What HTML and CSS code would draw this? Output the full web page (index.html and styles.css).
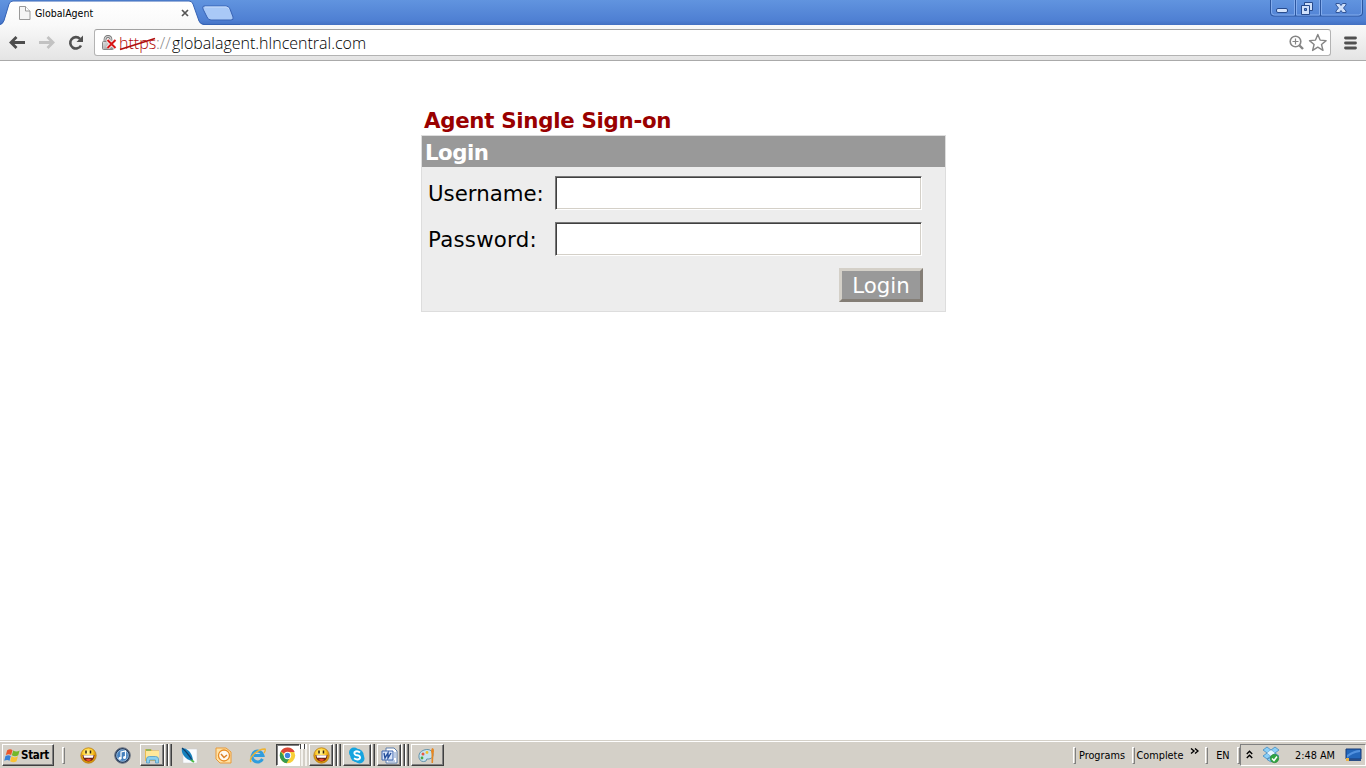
FILE: index.html
```html
<!DOCTYPE html>
<html lang="en">
<head>
<meta charset="utf-8">
<title>GlobalAgent</title>
<link rel="stylesheet" href="styles.css">
</head>
<body>
<svg width="0" height="0" class="defs" aria-hidden="true">
  <defs>
    <linearGradient id="lock" x2="1" y2="1"><stop stop-color="#e6e6e6"/><stop offset="1" stop-color="#8b8b8b"/></linearGradient>
    <radialGradient id="yellow" cx=".45" cy=".3"><stop stop-color="#fff7a0"/><stop offset=".6" stop-color="#ffcf30"/><stop offset="1" stop-color="#dc9508"/></radialGradient>
    <symbol id="smiley" viewBox="0 0 17 17">
      <circle cx="8.500" cy="8.500" r="7.700" fill="url(#yellow)" stroke="#b77d17" stroke-width=".8"/>
      <path d="M6 3.500v3M10.500 3.500v3" stroke="#302010" stroke-width="1.500"/>
      <path d="M2.500 8h12q-.8 6.500-6 6.500T2.500 8z" fill="#6b2116"/>
      <path d="M3.300 8.300h10.400l-.8 2.500H4.100z" fill="#fff"/>
      <path d="M5.500 12.800q3-2 6 0-3 2.400-6 0z" fill="#ef4a33"/>
    </symbol>
  </defs>
</svg>
<div class="screen">
  <header class="tabstrip">
    <svg class="tabs" width="240" height="25" viewBox="0 0 240 25">
      <defs><linearGradient id="tab" x2="0" y2="1"><stop stop-color="#fff"/><stop offset="1" stop-color="#f9f9f9"/></linearGradient></defs>
      <path d="M0 25q3-1 4-4L9 4q1-3 4-3h176q3 0 4 3l6 17q1 3 5 4z" fill="url(#tab)"/>
      <path d="M0 24.500q3-1 4-4L9 4q1-3 4-3h176q3 0 4 3l6 17q1 3 5 3.500h36" fill="none" stroke="#3563b5"/>
      <path d="M204 6h22q3 0 4 3l3 8q1 3-2 3h-20q-3 0-4-3l-4-8q-1-3 1-3z" fill="#a9c9f7" stroke="#3762b4"/>
      <path d="M205 7h21q2 0 3 2" fill="none" stroke="#c9ddfb"/>
    </svg>
    <div class="tab">
      <svg width="12" height="14" viewBox="0 0 12 14"><path d="M.5.5h6l4.500 4.500v8.500H.5z" fill="#f5f5f5" stroke="#999"/><path d="M6.500.5V5H11" fill="#fff" stroke="#999"/></svg>
      <span class="tabtitle">GlobalAgent</span>
      <svg class="close" width="8" height="8" viewBox="0 0 8 8"><path d="M1 1l6 6M7 1L1 7" stroke="#555" stroke-width="1.700"/></svg>
    </div>
    <svg class="winbuttons" width="98" height="18" viewBox="0 0 98 18">
      <path d="M1.500 0v13q0 3 3 3h86q3 0 3-3V0M26.500 0v16M51.500 0v16" fill="none" stroke="#2c569f"/>
      <path d="M2.500 0v12q0 3 3 3h20V0M27.500 0v15h23V0M52.500 0v15h37q3 0 3-3V0" fill="none" stroke="#83aced"/>
      <rect x="7.500" y="8.500" width="11" height="4" rx="1.500" fill="#d4e3fb" stroke="#274b8d"/>
      <path d="M35.500 2.500h8v8h-8z" fill="#cfe0fa" stroke="#274b8d"/>
      <path d="M32.500 5.500h8v9h-8z" fill="#cfe0fa" stroke="#274b8d"/>
      <path d="M35.500 8.500h2v2h-2z" fill="#5f94e3" stroke="#274b8d"/>
      <path d="M67 3.500h3.500l1.500 2 1.500-2H77v1.500L74.500 8l2.500 3v1.500h-3.500l-1.500-2-1.500 2H67V11l2.500-3L67 5z" fill="#cfe0fa" stroke="#274b8d" stroke-width=".9"/>
    </svg>
  </header>
  <nav class="toolbar">
    <svg class="navicons" width="94" height="35" viewBox="0 0 94 35">
      <path d="M25 17.500H12M16.500 12L11 17.500l5.500 5.500" fill="none" stroke="#4d4d4d" stroke-width="2.800"/>
      <path d="M39 17.500h13M47.500 12L53 17.500 47.500 23" fill="none" stroke="#c2c2c2" stroke-width="2.800"/>
      <path d="M80 13.800A5.700 5.700 0 1 0 81 20.500" fill="none" stroke="#505050" stroke-width="2.600"/><path d="M83 10.500v6.500h-6.500z" fill="#505050"/>
    </svg>
    <div class="omnibox">
      <svg class="lockicon" width="16" height="16" viewBox="0 0 16 16">
        <path d="M4 8V5q0-3.500 3-3.500T10 5v3" fill="none" stroke="#777" stroke-width="2.800"/><path d="M4 8V5q0-3.500 3-3.500T10 5v3" fill="none" stroke="#d5d5d5" stroke-width="1.200"/>
        <rect x="1.500" y="6.500" width="11" height="8" rx="1" fill="url(#lock)" stroke="#868686"/>
        <path d="M6.500 5l8 8M14.500 5l-8 8" stroke="#fff" stroke-width="3.500"/><path d="M6.500 5l8 8M14.500 5l-8 8" stroke="#d71414" stroke-width="2"/>
      </svg>
      <div class="url"><span class="scheme">https<svg width="37" height="14" viewBox="0 0 37 14"><path d="M1 12.500L36 1.500" stroke="#b00c0c" stroke-width="1.700"/></svg></span><span class="slashes">://</span><span class="host">globalagent.hlncentral.com</span></div>
      <svg class="boxicons" width="42" height="20" viewBox="0 0 42 20">
        <circle cx="7.500" cy="8.500" r="5.300" fill="none" stroke="#858585" stroke-width="1.600"/><path d="M4.500 8.500h6M7.500 5.500v6" stroke="#858585" stroke-width="1.200"/><path d="M11.500 12.500l3.500 3.500" stroke="#858585" stroke-width="2.400"/>
        <path d="M29.800 1.500l2.300 5.600 6 .5-4.600 3.900 1.500 5.900-5.200-3.200-5.200 3.200 1.500-5.900-4.600-3.900 6-.5z" fill="#fff" stroke="#858585" stroke-width="1.400" stroke-linejoin="round"/>
      </svg>
    </div>
    <svg class="menu" width="13" height="14" viewBox="0 0 13 14"><path d="M1.500 2h10M1.500 7h10M1.500 12h10" stroke="#505050" stroke-width="2.800" stroke-linecap="round"/></svg>
  </nav>
  <main class="page">
    <section class="signon">
      <h1>Agent Single Sign-on</h1>
      <form class="panel">
        <h2>Login</h2>
        <div class="row"><label for="u"><span class="ulabel">Username:</span></label><input id="u" type="text"></div>
        <div class="row"><label for="p"><span class="plabel">Password:</span></label><input id="p" type="password"></div>
        <div class="actions"><button type="button">Login</button></div>
      </form>
    </section>
  </main>
  <footer class="taskbar">
    <div class="startslot"><div class="start">
      <svg width="17" height="17" viewBox="0 0 16 16"><path d="M3 3q3-2 5 0L6.700 7.500q-2-1.500-5 0z" fill="#e9572b"/><path d="M8.700 3.300q3 2 6 0l-1.300 4.500q-3 1.800-6 0z" fill="#73b82b"/><path d="M1.400 8.500q2.800-1.600 5 0L5.200 13q-2-1.700-5 0z" fill="#3681d7"/><path d="M7.100 8.800q3 2 6 0l-1.300 4.500q-3 2-6 0z" fill="#fac233"/></svg><b>Start</b></div></div>
    <div class="slot sepslot"><i class="sep"></i></div>
    <div class="slot w33"><svg width="17" height="17"><use href="#smiley"/></svg></div>
    <div class="slot"><svg width="17" height="17" viewBox="0 0 17 17"><circle cx="8.500" cy="8.500" r="7.800" fill="#22395c" stroke="#6f7784"/><circle cx="8.500" cy="8.500" r="5.800" fill="#4580bd" stroke="#b8d8f4" stroke-width=".8"/><path d="M7 11V5l4.500-1v6.500" fill="none" stroke="#fff" stroke-width="1.200"/><circle cx="6" cy="11.300" r="1.500" fill="#fff"/><circle cx="10.500" cy="10.500" r="1.500" fill="#fff"/></svg></div>
    <div class="slot"><div class="task stack"><svg width="17" height="17" viewBox="0 0 17 17"><path d="M1 2h6l1.500 1.500H15V14H1z" fill="#e8ba50"/><path d="M2 4h13v9H2z" fill="#ffe89a"/><path d="M2 3h5" stroke="#5fae64" stroke-width="1.200"/><path d="M2.500 16v-4q0-2.500 3-2.500h6q3 0 3 2.500v4h-3v-3h-6v3z" fill="#8bd0ef" stroke="#529ac4" stroke-width=".8"/></svg></div></div>
    <div class="slot w33"><svg width="17" height="17" viewBox="0 0 17 17"><rect x="2" y="2" width="14" height="14" fill="#fafcff" stroke="#c9cccf" stroke-width=".5"/><path d="M1 1q4 0 7 3t4 9l-1 1q-5-1-8-5T1 1z" fill="#1681bd"/><path d="M1 1q5 4 10 12" fill="none" stroke="#133c66" stroke-width="1.200"/><path d="M10 13l3 2" stroke="#4cba45" stroke-width="2"/></svg></div>
    <div class="slot w35"><svg width="17" height="17" viewBox="0 0 17 17"><path d="M1 1h10l5 4v11H5l-4-4z" fill="#ffe2a6" stroke="#e89938"/><circle cx="9" cy="8.500" r="5.500" fill="#fffaf0" stroke="#e78b23" stroke-width="1.300"/><path d="M6 7l3 3.500L12 8" fill="none" stroke="#dc8128" stroke-width="1.500"/></svg></div>
    <div class="slot"><svg width="18" height="17" viewBox="0 0 18 17"><path d="M13.500 12A5.500 5.500 0 1 1 14 8.500H5" fill="none" stroke="#309ddd" stroke-width="3"/><path d="M2 15q-2-3 3-8T16 2q1 1-1 4" fill="none" stroke="#efb331" stroke-width="1.400"/></svg></div>
    <div class="slot w33"><div class="task active"><svg width="17" height="17" viewBox="0 0 17 17"><circle cx="8.500" cy="8.500" r="7.700" fill="#f8cf37"/><path d="M8.500 8.500L1.700 4.500A8 8 0 0 1 15.700 5H8.500z" fill="#dc4637"/><path d="M1.700 4.500A8 8 0 0 0 7.500 16.200L11 10.500 6 10.500z" fill="#369b50"/><circle cx="8.500" cy="8.500" r="3.700" fill="#fff"/><circle cx="8.500" cy="8.500" r="2.700" fill="#4184dd"/></svg></div><i class="dots"></i></div>
    <div class="slot"><div class="task stack"><svg width="17" height="17"><use href="#smiley"/></svg></div></div>
    <div class="slot"><div class="task stack single"><svg width="18" height="17" viewBox="0 0 18 17"><circle cx="6" cy="5.500" r="5" fill="#16a4df"/><circle cx="11.500" cy="11.500" r="5" fill="#16a4df"/><circle cx="9" cy="8.500" r="6.800" fill="#16a4df"/><path d="M12 5.500Q9 3 6.500 5.200 5.800 7.700 9 8.300q4 .7 2.800 3.200Q9.500 13.500 6 11.300" fill="none" stroke="#fff" stroke-width="1.900"/></svg></div></div>
    <div class="slot"><div class="task stack"><svg width="17" height="17" viewBox="0 0 17 17"><path d="M5 1h8l3 3v12H5z" fill="#fff" stroke="#5e7fac"/><path d="M13 6h2M13 8h2M13 10h2M7 14h7" stroke="#7899cb"/><path d="M1 4h11v9H1z" fill="#d8e5fa" stroke="#3c65ad"/><path d="M3 6l1 5 3-5v5l3-5" fill="none" stroke="#234d9b" stroke-width="1.400"/></svg></div></div>
    <div class="slot"><div class="task wide"><svg width="18" height="17" viewBox="0 0 18 17"><path d="M6 3Q0 5 1 11q2 5 7 3 0-3 3-2 5-1 4-6-3-5-9-3z" fill="#c6e3ef" stroke="#6695ac"/><circle cx="5" cy="7" r="1.500" fill="#e85b42"/><circle cx="9" cy="5.500" r="1.400" fill="#f2c12d"/><circle cx="4" cy="11" r="1.400" fill="#4bab48"/><path d="M14 1q3 0 1.500 6L15 16h-1.500V7q-1-4 .5-6z" fill="#e58724"/></svg></div></div>
    <div class="spacer"></div>
    <div class="right">
      <i class="sep"></i><span class="tx programs">Programs</span>
      <i class="sep"></i><span class="tx complete">Complete</span>
      <svg class="more" width="9" height="7" viewBox="0 0 9 7"><path d="M1 .5l3 2.500-3 2.500M5 .5l3 2.500-3 2.500" fill="none" stroke="#000" stroke-width="1.400"/></svg>
      <i class="sep"></i><span class="tx en">EN</span><i class="sep thin"></i>
    </div>
    <div class="tray">
      <svg class="chev" width="7" height="9" viewBox="0 0 7 9"><path d="M.8 4l2.700-2.800L6.200 4M.8 8l2.700-2.800L6.200 8" fill="none" stroke="#000" stroke-width="1.400"/></svg>
      <svg class="dropbox" width="18" height="18" viewBox="0 0 18 18"><path d="M5 1l4 3-4 3-4-3zM13 1l4 3-4 3-4-3zM5 7l4 3-4 3-4-3zM13 7l4 3-4 3-4-3zM5 13.500L9 11l4 2.500L9 16z" fill="#8bcff7" stroke="#3683bc" stroke-width=".7"/><path d="M9 4l4 3-4 3-4-3z" fill="#e3f5ff"/><circle cx="12.500" cy="12.500" r="4.200" fill="#31a642" stroke="#218231" stroke-width=".6"/><path d="M10 12.500l2 2 3-4" fill="none" stroke="#fff" stroke-width="1.500"/></svg>
      <span class="tx clock">2:48 AM</span>
      <svg class="desktop" width="17" height="14" viewBox="0 0 17 14"><path d="M1 1h15v10H1z" fill="#2467bb" stroke="#173b77"/><path d="M2 7q7-5 13-5v2Q7 5 2 10z" fill="#5292df"/><path d="M1 11h15v2H1z" fill="#294d86"/><path d="M1 10h3v3H1z" fill="#e9b44a"/></svg>
    </div>
  </footer>
</div>
</body>
</html>
```
FILE: styles.css
```css
* { box-sizing: border-box; }
body { margin: 0; overflow: hidden; font-family: "DejaVu Sans Condensed", "DejaVu Sans", sans-serif; background: #fff; }
svg { display: block; flex: none; }
.defs { position: absolute; }
.screen { width: 1366px; height: 768px; display: flex; flex-direction: column; }
.tabstrip { position: relative; height: 25px; flex: none; display: flex; justify-content: space-between; background: linear-gradient(#6194df, #4f80d3 80%, #4270c2); }
.tabs { position: absolute; left: 0; top: 0; }
.tab { position: relative; display: flex; align-items: center; width: 200px; height: 25px; padding-left: 19px; }
.tabtitle { width: 60px; margin-left: 4px; font-size: 10.5px; letter-spacing: 0; white-space: nowrap; }
.close { margin-left: 86px; }
.winbuttons { margin-right: -1px; }
.toolbar { height: 36px; flex: none; display: flex; align-items: flex-start; background: linear-gradient(#f9f9f9, #e4e4e4); border-bottom: 1px solid #aaa; }
.omnibox { display: flex; align-items: center; width: 1237px; height: 27px; margin-top: 4px; padding-left: 6px; background: #fff; border: 1px solid #b3b3b3; border-top-color: #a2a2a2; border-radius: 3px; }
.lockicon { margin-right: 2px; }
.url { display: flex; width: 260px; font-family: "Open Sans", sans-serif; font-weight: 300; font-size: 16px; line-height: 20px; white-space: nowrap; }
.scheme { position: relative; width: 37px; color: #b10808; }
.scheme svg { position: absolute; left: 0; top: 4px; }
.slashes { width: 16px; color: #888; }
.boxicons { margin-left: auto; margin-right: 0; }
.menu { margin: 11px 0 0 13px; }
.page { flex: 1; display: flex; justify-content: center; align-items: flex-start; padding: 46px 0 0 1px; font-family: "DejaVu Sans", Verdana, sans-serif; }
.signon { width: 525px; }
h1, h2 { margin: 0; font-size: 21.3px; font-weight: bold; white-space: nowrap; }
h1 { height: 28px; padding-left: 3px; line-height: 27px; letter-spacing: -.28px; color: #900; }
.panel { height: 177px; margin: 0; background: #ededed; border: 1px solid #ddd; }
h2 { height: 31px; padding-left: 3px; line-height: 33px; letter-spacing: -.5px; color: #fff; background: #999; }
.row { display: flex; height: 33px; margin: 9px 0 13px 6px; align-items: center; }
.row + .row { margin-top: 0; }
label { width: 127px; padding-top: 2px; font-size: 21.3px; white-space: nowrap; }
.plabel { letter-spacing: .25px; }
input { width: 367px; height: 34px; padding: 1px 4px; font: 21px "DejaVu Sans", sans-serif; background: #fff; border: 1px solid; border-color: #777 #fff #fff #777; box-shadow: inset 1px 1px #404040, inset -1px -1px #d4d0c8; border-radius: 0; outline: 0; }
.actions { display: flex; justify-content: flex-end; padding-right: 22px; }
button { width: 84px; height: 34px; padding: 0; font: 21.3px "DejaVu Sans", sans-serif; color: #fff; background: #999; border: 3px solid; border-color: #d4d0c8 #847e76 #847e76 #d4d0c8; border-radius: 0; }
.taskbar { height: 28px; flex: none; display: flex; align-items: center; padding-top: 2px; background: #d4d0c8; box-shadow: inset 0 1px #d4d0c8, inset 0 2px #fff; }
.startslot { width: 56px; padding-left: 2px; }
.start { display: flex; align-items: center; width: 52px; height: 22px; padding-left: 1px; font-size: 11.5px; letter-spacing: -.3px; border: 1px solid; border-color: #fff #404040 #404040 #fff; box-shadow: inset -1px -1px #808080; }
.slot { position: relative; display: flex; width: 34px; height: 24px; align-items: center; justify-content: center; }
.w33 { width: 33px; }
.w35 { width: 35px; }
.sepslot { width: 16px; padding-right: 2px; }
.sep { width: 3px; height: 17px; flex: none; border: 1px solid; border-color: #fff #808080 #808080 #fff; }
.task { width: 24px; height: 22px; margin-right: 8px; display: flex; align-items: center; justify-content: center; border: 1px solid; border-color: #fff #404040 #404040 #fff; box-shadow: inset -1px -1px #808080; }
.stack { box-shadow: inset -1px -1px #808080, 1px 0 #fff, 2px 0 #d4d0c8, 3px 0 #808080, 4px 0 #404040, 5px 0 #fff, 6px 0 #d4d0c8, 7px 0 #808080, 8px 0 #404040; }
.single { width: 28px; margin-right: 4px; box-shadow: inset -1px -1px #808080, 1px 0 #fff, 2px 0 #d4d0c8, 3px 0 #808080, 4px 0 #404040; }
.wide { width: 33px; margin-right: 0; }
.active { background: #fff; border-color: #404040 #fff #fff #404040; box-shadow: inset 1px 1px #808080; }
.dots { position: absolute; right: 1px; top: 1px; width: 7px; height: 22px; background: repeating-linear-gradient(90deg, #404040 0 1px, #fff 1px 4px) 0 0 / 7px 5px no-repeat, repeating-linear-gradient(90deg, #d4d0c8 0 1px, #f4f2ee 1px 3px, #d4d0c8 3px 4px); }
.spacer { flex: 1; }
.right { display: flex; align-items: center; width: 167px; height: 24px; }
.tx { font-size: 10.8px; letter-spacing: 0; white-space: nowrap; }
.programs { width: 53px; margin-left: 3px; }
.complete { width: 50px; margin-left: 2px; }
.more { margin: -7px 6px 0 4px; }
.en { width: 20px; margin-left: 8px; }
.thin { margin-left: 1px; }
.tray { display: flex; align-items: center; width: 126px; height: 22px; border: 1px solid; border-color: #808080 #fff #fff #808080; }
.chev { margin: -2px 9px 0 5px; }
.dropbox { margin-right: 15px; }
.clock { width: 50px; }
```
